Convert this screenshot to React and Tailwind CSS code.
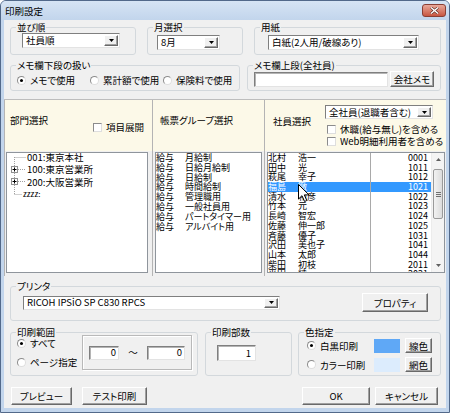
import React from 'react';

const employees = [
  ['北村', '浩一', '0001'],
  ['田中', '光', '1011'],
  ['萩尾', '幸子', '1012'],
  ['福島', '徹', '1021'],
  ['清水', '和彦', '1022'],
  ['竹本', '元', '1023'],
  ['長崎', '智宏', '1024'],
  ['佐藤', '伸一郎', '1025'],
  ['斉藤', '優子', '1031'],
  ['沢田', '美也子', '1041'],
  ['山本', '太郎', '1044'],
  ['柴田', '初枝', '2011'],
  ['平田', '純', '2021'],
];

const reports = ['月給制', '日給月給制', '日給制', '時間給制', '管理職用', '一般社員用', 'パートタイマー用', 'アルバイト用'];

const sunken = 'border border-t-[#7f7f7f] border-l-[#7f7f7f] border-r-[#e3e3e3] border-b-[#e3e3e3]';
const raised = 'border border-t-white border-l-white border-r-[#696969] border-b-[#696969] shadow-[inset_-1px_-1px_0_#a0a0a0]';

function Group({ label, className = '', children }) {
  return (
    <fieldset className={`shrink-0 border border-[#d3d8dc] rounded-[3px] ${className}`}>
      <legend className="ml-[5px] px-[1px] leading-[12px]">{label}</legend>
      {children}
    </fieldset>
  );
}

function Combo({ value, className = '' }) {
  return (
    <div className={`flex bg-white p-px ${sunken} ${className}`}>
      <div className="flex-1 flex items-center pl-[2px] leading-[11px] whitespace-nowrap">{value}</div>
      <div className={`w-[14px] flex items-center justify-center bg-[#f0f0f0] ${raised}`}>
        <svg width="5" height="3" viewBox="0 0 5 3">
          <path d="M0 0h5L2.5 3z" fill="#000" />
        </svg>
      </div>
    </div>
  );
}

function Field({ value = '', className = '' }) {
  return (
    <div className={`bg-white flex items-center justify-end pr-[2px] leading-[11px] shadow-[inset_1px_1px_0_#b4b4b4] ${sunken} ${className}`}>
      {value}
    </div>
  );
}

function Btn({ children, className = '' }) {
  return (
    <button className={`shrink-0 flex items-center justify-center bg-[#f0f0f0] leading-[12px] ${raised} ${className}`}>
      {children}
    </button>
  );
}

function Radio({ checked, label, className = '' }) {
  return (
    <div className={`flex items-center leading-[12px] whitespace-nowrap ${className}`}>
      <span className="w-[9px] h-[9px] shrink-0 rounded-full bg-white border border-t-[#8c8c8c] border-l-[#8c8c8c] border-r-[#dedede] border-b-[#dedede] flex items-center justify-center">
        {checked && <span className="w-[3px] h-[3px] rounded-full bg-black" />}
      </span>
      <span className="ml-[4px]">{label}</span>
    </div>
  );
}

function Check({ label, className = '' }) {
  return (
    <div className={`flex items-center leading-[12px] whitespace-nowrap ${className}`}>
      <span className="w-[9px] h-[9px] shrink-0 bg-white border border-t-[#8c8c8c] border-l-[#8c8c8c] border-r-[#dedede] border-b-[#dedede]" />
      <span className="ml-[4px]">{label}</span>
    </div>
  );
}

function TreeList() {
  return (
    <div className="relative ml-px mt-px w-[142px] h-[121px] bg-white border border-[#8f959c] overflow-hidden">
      <svg className="absolute left-0 top-0" width="24" height="46" viewBox="0 0 24 46">
        <g stroke="#a0a0a0" strokeDasharray="1 1" fill="none">
          <path d="M7.5 4v37" />
          <path d="M7.5 4.5h11" />
          <path d="M11 16.5h7" />
          <path d="M11 28.5h7" />
          <path d="M7.5 41.5h8" />
        </g>
        <g fill="#fff" stroke="#919191">
          <rect x="4.5" y="13.5" width="6" height="6" />
          <rect x="4.5" y="25.5" width="6" height="6" />
        </g>
        <g stroke="#000">
          <path d="M5.5 16.5h4M7.5 14.5v4" />
          <path d="M5.5 28.5h4M7.5 26.5v4" />
        </g>
      </svg>
      <div className="-mt-[2px] leading-[12.3px] whitespace-nowrap">
        <div className="pl-[20px]">001:東京本社</div>
        <div className="pl-[20px]">100:東京営業所</div>
        <div className="pl-[20px]">200:大阪営業所</div>
        <div className="pl-[16px] text-[8px]">zzzz:</div>
      </div>
    </div>
  );
}

function ReportList() {
  return (
    <div className="ml-[2px] mt-px w-[107px] h-[121px] bg-white border border-[#8f959c] overflow-hidden text-[9px] leading-[9.8px] whitespace-nowrap">
      {reports.map((r) => (
        <div key={r} className="flex">
          <span className="w-[29px] shrink-0">給与</span>
          <span>{r}</span>
        </div>
      ))}
    </div>
  );
}

function EmployeeList() {
  return (
    <div className="ml-[2px] mt-px w-[178px] h-[121px] bg-white border border-[#8f959c] flex overflow-hidden">
      <div className="relative w-[163px] overflow-hidden text-[9px] leading-[9.7px] whitespace-nowrap">
        {employees.map(([sur, given, no]) => {
          const sel = no === '1021';
          return (
            <div key={no} className={`flex h-[9.7px] ${sel ? 'bg-[#3399ff] text-white' : ''}`}>
              <div className="w-[103px] shrink-0 flex border-r border-[#a9a9a9]">
                <span className="w-[30px] shrink-0">{sur}</span>
                <span>{given}</span>
              </div>
              <div className="flex-1 text-right pr-[3px]">{no}</div>
            </div>
          );
        })}
        <svg className="absolute left-[30px] top-[31px]" width="11" height="18" viewBox="0 0 11 18">
          <path d="M0.5 0.5v14.5l3.5-3.3 2.6 5.8 2.2-1-2.5-5.6h4.7z" fill="#fff" stroke="#000" />
        </svg>
      </div>
      <div className="w-[13px] shrink-0 flex flex-col bg-[#f4f4f4] border-l border-[#ececec]">
        <div className="h-[13px] flex items-center justify-center">
          <svg width="5" height="3" viewBox="0 0 5 3">
            <path d="M2.5 0L5 3H0z" fill="#606060" />
          </svg>
        </div>
        <div className="flex-1">
          <div className="mt-[3px] mx-px h-[50px] rounded-[2px] border border-[#9a9a9a] bg-gradient-to-r from-[#f2f2f2] to-[#dcdcdc] flex flex-col items-center justify-center gap-px">
            <span className="w-[5px] h-px bg-[#707070]" />
            <span className="w-[5px] h-px bg-[#707070]" />
            <span className="w-[5px] h-px bg-[#707070]" />
          </div>
        </div>
        <div className="h-[13px] flex items-center justify-center">
          <svg width="5" height="3" viewBox="0 0 5 3">
            <path d="M0 0h5L2.5 3z" fill="#606060" />
          </svg>
        </div>
      </div>
    </div>
  );
}

export default function App() {
  return (
    <div className="w-[450px] h-[413px] flex flex-col bg-[#c2d5ec] border border-[#52698a] rounded-t-[6px] overflow-hidden text-[9.5px] text-black font-['Noto_Sans_CJK_JP','Noto_Sans',sans-serif] [font-feature-settings:'palt']">
      {/* title bar */}
      <div className="h-[19px] shrink-0 flex bg-gradient-to-b from-[#d6e4f4] to-[#c2d5ec]">
        <span className="pl-[4px] self-center leading-[12px]">印刷設定</span>
        <div className="ml-auto mr-[3px] mt-[3px] w-[24px] h-[13px] rounded-[3px] border border-[#8a3f34] bg-gradient-to-b from-[#e9a89a] to-[#c75641] flex items-center justify-center">
          <svg width="9" height="7" viewBox="0 0 9 7">
            <path d="M1 0.5l7 6M8 0.5l-7 6" stroke="#5a2a22" strokeWidth="2.6" />
            <path d="M1 0.5l7 6M8 0.5l-7 6" stroke="#fff" strokeWidth="1.4" />
          </svg>
        </div>
      </div>

      {/* client */}
      <div className="flex-1 mx-[3px] mb-[4px] bg-[#f0f0f0] flex flex-col">
        <div className="mt-px h-[34px] flex">
          <Group label="並び順" className="ml-[6px] w-[126px] h-[34px]">
            <Combo value="社員順" className="ml-[11px] w-[98px] h-[15px]" />
          </Group>
          <Group label="月選択" className="ml-[11px] w-[96px] h-[34px]">
            <Combo value="8月" className="ml-[9px] mt-[2px] w-[63px] h-[15px]" />
          </Group>
          <Group label="用紙" className="ml-[11px] w-[187px] h-[34px]">
            <Combo value="白紙(2人用/破線あり)" className="ml-[13px] mt-[2px] w-[151px] h-[15px]" />
          </Group>
        </div>

        <div className="mt-[4px] h-[32px] flex">
          <Group label="メモ欄下段の扱い" className="ml-[6px] w-[230px] h-[32px]">
            <div className="mt-[3px] flex">
              <Radio checked label="メモで使用" className="ml-[6px] w-[73px]" />
              <Radio label="累計額で使用" className="w-[73px]" />
              <Radio label="保険料で使用" />
            </div>
          </Group>
          <Group label="メモ欄上段(全社員)" className="ml-[7px] w-[194px] h-[32px]">
            <div className="flex items-center">
              <Field className="ml-[6px] w-[134px] h-[15px]" />
              <Btn className="ml-[2px] w-[44px] h-[16px]">会社メモ</Btn>
            </div>
          </Group>
        </div>

        {/* selection panels */}
        <div className="mt-[8px] h-[177px] flex border-t border-[#bdbdbd]">
          <div className="w-[148px] shrink-0 border-l border-[#b4b4b4]">
            <div className="h-[51px] bg-[#fcf9e8] flex items-start leading-[12px]">
              <span className="ml-[5px] mt-[14px] w-[83px] shrink-0">部門選択</span>
              <Check label="項目展開" className="mt-[21px]" />
            </div>
            <TreeList />
          </div>
          <div className="w-[112px] shrink-0 border-l border-[#b4b4b4]">
            <div className="h-[51px] bg-[#fcf9e8] leading-[12px]">
              <div className="ml-[7px] pt-[14px]">帳票グループ選択</div>
            </div>
            <ReportList />
          </div>
          <div className="w-[182px] shrink-0 border-l border-[#b4b4b4]">
            <div className="h-[51px] bg-[#fcf9e8] flex items-start leading-[12px]">
              <span className="ml-[8px] mt-[15px] w-[52px] shrink-0">社員選択</span>
              <div className="flex flex-col">
                <Combo value="全社員(退職者含む)" className="mt-[5px] w-[108px] h-[14px]" />
                <Check label="休職(給与無し)を含める" className="mt-[4px] ml-[2px]" />
                <Check label="Web明細利用者を含める" className="ml-[2px]" />
              </div>
            </div>
            <EmployeeList />
          </div>
        </div>

        <div className="mt-[4px] h-[41px] flex">
          <Group label="プリンタ" className="ml-[6px] w-[431px] h-[41px]">
            <div className="mt-px h-[19px] flex items-center">
              <Combo value="RICOH IPSiO SP C830 RPCS" className="ml-[12px] w-[257px] h-[14px]" />
              <Btn className="ml-[82px] w-[66px] h-[19px]">プロパティ</Btn>
            </div>
          </Group>
        </div>

        <div className="mt-[5px] h-[50px] flex">
          <Group label="印刷範囲" className="ml-[6px] w-[188px] h-[50px]">
            <div className="-mt-[3px] flex">
              <div className="w-[71px] shrink-0 pl-[6px] pt-[2px]">
                <Radio checked label="すべて" />
                <Radio label="ページ指定" className="mt-[7px]" />
              </div>
              <div className="w-[110px] h-[35px] flex items-center pl-[6px] border border-[#b9b9b9] shadow-[inset_1px_1px_0_#fff,1px_1px_0_#fff]">
                <Field value="0" className="w-[30px] h-[14px]" />
                <span className="w-[28px] text-center">～</span>
                <Field value="0" className="w-[38px] h-[14px]" />
              </div>
            </div>
          </Group>
          <Group label="印刷部数" className="ml-[7px] w-[87px] h-[50px]">
            <Field value="1" className="ml-[11px] mt-[7px] w-[39px] h-[16px] pr-[4px]" />
          </Group>
          <Group label="色指定" className="ml-[6px] w-[143px] h-[50px]">
            <div className="ml-[8px] h-[15px] flex items-center">
              <Radio checked label="白黒印刷" className="w-[67px]" />
              <span className="w-[26px] h-[14px] bg-[#5fa8f6]" />
              <Btn className="ml-[5px] w-[27px] h-[15px]">線色</Btn>
            </div>
            <div className="ml-[8px] mt-[4px] h-[15px] flex items-center">
              <Radio label="カラー印刷" className="w-[67px]" />
              <span className="w-[26px] h-[14px] bg-[#dcecfd]" />
              <Btn className="ml-[5px] w-[27px] h-[15px]">網色</Btn>
            </div>
          </Group>
        </div>

        <div className="mt-[11px] h-[18px] flex">
          <Btn className="ml-[7px] w-[61px] h-[18px]">プレビュー</Btn>
          <Btn className="ml-[10px] w-[65px] h-[18px]">テスト印刷</Btn>
          <Btn className="ml-[155px] w-[68px] h-[18px]">OK</Btn>
          <Btn className="ml-[5px] w-[63px] h-[18px]">キャンセル</Btn>
        </div>
      </div>
    </div>
  );
}
